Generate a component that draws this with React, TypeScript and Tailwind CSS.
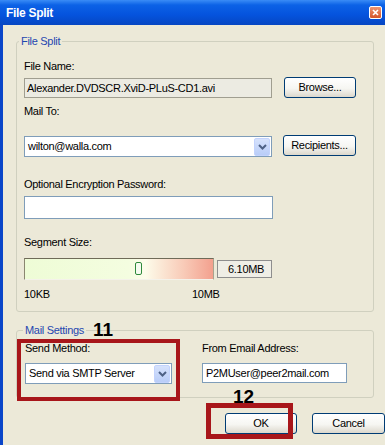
import React from "react";

const font = "font-['Liberation_Sans',Arial,sans-serif]";

function Label({ children }: { children: React.ReactNode }) {
  return <div className="h-[14px] leading-[14px] tracking-[-0.3px] text-black">{children}</div>;
}

function XpButton({ children, w }: { children: React.ReactNode; w: string }) {
  return (
    <button
      className={`${w} h-[21px] rounded-[3px] border border-[#003c74] bg-[linear-gradient(to_bottom,#ffffff,#f6f6f2_55%,#dcd8cc)] text-[11px] leading-none tracking-[-0.3px] text-black flex items-center justify-center`}
    >
      {children}
    </button>
  );
}

function Arrow() {
  return (
    <div className="w-[16px] h-[18px] mr-px rounded-[2px] bg-[linear-gradient(to_bottom,#d6e2fc,#b9cdf8)] border border-[#c3d3fd] flex items-center justify-center">
      <svg width="9" height="6" viewBox="0 0 9 6">
        <path d="M1 1 L4.5 4.5 L8 1" fill="none" stroke="#4d6185" strokeWidth="2" />
      </svg>
    </div>
  );
}

function Combo({ value, w }: { value: string; w: string }) {
  return (
    <div className={`${w} h-[21px] border border-[#7f9db9] bg-white flex items-center`}>
      <div className="flex-1 pl-[3px] tracking-[-0.3px]">{value}</div>
      <Arrow />
    </div>
  );
}

export default function App() {
  return (
    <div className={`relative w-[385px] h-[445px] overflow-hidden flex flex-col bg-[#ece9d8] text-[11px] ${font}`}>
      {/* title bar */}
      <div className="h-[25px] flex items-center justify-between pl-[6px] pr-[3px] bg-[linear-gradient(to_bottom,#3a8cf6,#0c62e6_20%,#0553dd_60%,#0646c2)]">
        <span className="text-white font-bold text-[12px] tracking-[-0.3px] leading-none">File Split</span>
        <div className="w-[13px] h-[13px] rounded-[2px] border border-white bg-[linear-gradient(to_bottom,#ee9470,#d4552a)] flex items-center justify-center">
          <svg width="7" height="7" viewBox="0 0 7 7">
            <path d="M1 1 L6 6 M6 1 L1 6" stroke="#fff" strokeWidth="1.6" />
          </svg>
        </div>
      </div>

      {/* body */}
      <div className="flex-1 border-l-[3px] border-[#0a46c9] pl-[13px] flex flex-col">
        <fieldset className="mt-[9px] w-[358px] border border-[#d0d0bf] rounded-[3px] pl-[7px] pb-[10px]">
          <legend className="ml-[-5px] px-[2px] h-[14px] leading-[14px] tracking-[-0.3px] text-[#1f47b0]">File Split</legend>

          <div className="mt-[11px]">
            <Label>File Name:</Label>
          </div>
          <div className="mt-[5px] flex items-start">
            <div className="w-[248px] h-[20px] border border-[#a09e90] bg-[#ecebe2] pl-[2px] leading-[18px] tracking-[-0.3px]">
              Alexander.DVDSCR.XviD-PLuS-CD1.avi
            </div>
            <div className="ml-[12px] -mt-px">
              <XpButton w="w-[72px]">Browse...</XpButton>
            </div>
          </div>

          <div className="mt-[6px]">
            <Label>Mail To:</Label>
          </div>
          <div className="mt-[18px] flex items-start">
            <Combo value="wilton@walla.com" w="w-[248px]" />
            <div className="ml-[11px] -mt-px">
              <XpButton w="w-[73px]">Recipients...</XpButton>
            </div>
          </div>

          <div className="mt-[20px]">
            <Label>Optional Encryption Password:</Label>
          </div>
          <div className="mt-[5px] w-[249px] h-[23px] border border-[#7f9db9] bg-white" />

          <div className="mt-[16px]">
            <Label>Segment Size:</Label>
          </div>
          <div className="mt-[9px] flex items-center">
            <div className="relative w-[190px] h-[22px] border border-t-[#6f6b58] border-l-[#8a8670] border-r-[#a8a490] border-b-[#f4f2ea] bg-[linear-gradient(to_right,#eefcd6,#f4fde0_55%,#fdfcea_64%,#f8c9b6_85%,#f3a08e)]">
              <div className="absolute left-[110px] top-[3px] w-[7px] h-[13px] rounded-[2px] border border-[#2f8a3c] bg-[#f6fbf0]" />
            </div>
            <div className="ml-[3px] w-[55px] h-[18px] border border-[#8e8e8e] bg-[#efeee6] pl-[10px] leading-[16px] tracking-[-0.3px]">
              6.10MB
            </div>
          </div>

          <div className="mt-[7px] flex">
            <div className="w-[168px]">
              <Label>10KB</Label>
            </div>
            <Label>10MB</Label>
          </div>
        </fieldset>

        <fieldset className="mt-[11px] w-[358px] border border-[#d0d0bf] rounded-[3px] pl-[8px] pt-[4px] pb-[13px]">
          <legend className="ml-[-2px] px-[2px] h-[14px] leading-[14px] tracking-[-0.3px] text-[#1f47b0]">Mail Settings</legend>
          <div className="flex">
            <div className="w-[177px]">
              <Label>Send Method:</Label>
              <div className="mt-[8px]">
                <Combo value="Send via SMTP Server" w="w-[147px]" />
              </div>
            </div>
            <div>
              <Label>From Email Address:</Label>
              <div className="mt-[8px] w-[145px] h-[20px] border border-[#7f9db9] bg-white pl-[3px] leading-[18px] tracking-[-0.3px]">
                P2MUser@peer2mail.com
              </div>
            </div>
          </div>
        </fieldset>

        <div className="mt-[15px] w-[369px] flex justify-end gap-[15px]">
          <XpButton w="w-[72px]">OK</XpButton>
          <XpButton w="w-[73px]">Cancel</XpButton>
        </div>
      </div>

      {/* annotations */}
      <div className="absolute left-[93px] top-[320px] text-[19px] font-bold leading-none text-black">11</div>
      <div className="absolute left-[17px] top-[339px] w-[163px] h-[62px] border-[4px] border-[#a8161a]" />
      <div className="absolute left-[233px] top-[387px] text-[19px] font-bold leading-none text-black">12</div>
      <div className="absolute left-[206px] top-[403px] w-[87px] h-[36px] border-[5px] border-[#a8161a]" />
    </div>
  );
}
